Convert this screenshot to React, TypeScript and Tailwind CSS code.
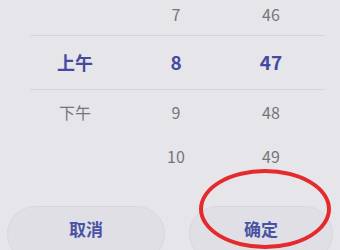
import React from 'react';

const rows = [
  { ampm: '', hour: '7', minute: '46', h: 'h-[35px] pb-[8px]', active: false },
  { ampm: '上午', hour: '8', minute: '47', h: 'h-[53px]', active: true },
  { ampm: '下午', hour: '9', minute: '48', h: 'h-[45px] pb-[2px]', active: false },
  { ampm: '', hour: '10', minute: '49', h: 'h-[42px]', active: false },
];

const App: React.FC = () => {
  return (
    <div
      className="relative w-[340px] h-[250px] overflow-hidden bg-[#e6e5ea]"
      style={{ fontFamily: '"Noto Sans CJK SC", "Noto Sans", sans-serif' }}
    >
      <div>
        {rows.map((r, i) => (
          <div key={i}>
            <div className={`flex items-center ${r.h}`}>
              <div
                className={`w-[150px] text-center ${
                  r.active ? 'text-[18px] font-semibold text-[#444a9e]' : 'text-[16px] text-[#76767a]'
                }`}
              >
                {r.ampm}
              </div>
              <div
                className={`w-[52px] text-center ${
                  r.active ? 'text-[19px] font-bold text-[#444a9e]' : 'text-[16px] text-[#76767a]'
                }`}
              >
                {r.hour}
              </div>
              <div
                className={`flex-1 text-center ${
                  r.active ? 'text-[19px] font-bold text-[#444a9e]' : 'text-[16px] text-[#76767a]'
                }`}
              >
                {r.minute}
              </div>
            </div>
            {i < 2 && <div className="ml-[30px] mr-[15px] h-px bg-[#d6d5db]" />}
          </div>
        ))}
      </div>

      <div className="flex justify-between px-[7px] mt-[29px]">
        <button className="w-[158px] h-[56px] rounded-full bg-[#e0dfe5] border border-[#d8d7dd] text-[17px] font-semibold text-[#4a52a6] pb-[10px]">
          取消
        </button>
        <button className="w-[144px] h-[56px] rounded-full bg-[#e0dfe5] border border-[#d8d7dd] text-[17px] font-semibold text-[#4a52a6] pb-[10px]">
          确定
        </button>
      </div>

      <div className="absolute left-[199px] top-[169px] w-[132px] h-[80px] rounded-[50%] border-[4px] border-[#e42a2c]" />
    </div>
  );
};

export default App;
